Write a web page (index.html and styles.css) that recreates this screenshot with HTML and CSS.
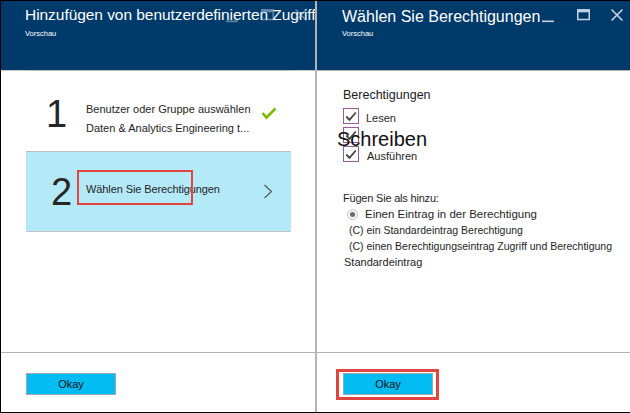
FILE: index.html
```html
<!DOCTYPE html>
<html lang="de">
<head>
<meta charset="utf-8">
<title>Berechtigungen</title>
<link rel="stylesheet" href="styles.css">
</head>
<body>
<div class="frame">
  <section class="blade blade-left">
    <header class="blade-head">
      <h1 class="blade-title">Hinzufügen von benutzerdefinierten Zugriff</h1>
      <div class="blade-sub">Vorschau</div>
      <svg class="win-ctrls faint" width="82" height="24" viewBox="0 0 82 24">
        <rect x="0" y="19.5" width="12" height="1.6" fill="#c5d3e3"/>
        <rect x="35.75" y="9" width="11.5" height="9.5" fill="none" stroke="#c5d3e3" stroke-width="1.5"/>
        <rect x="35" y="8.3" width="13" height="3" fill="#c5d3e3"/>
        <path d="M69.5 8.5 L80.5 19.5 M80.5 8.5 L69.5 19.5" stroke="#c5d3e3" stroke-width="1.6" fill="none"/>
      </svg>
    </header>
    <div class="blade-body">
      <ol class="steps">
        <li class="step step-done">
          <div class="step-num">1</div>
          <div class="step-text">
            <div>Benutzer oder Gruppe auswählen</div>
            <div>Daten &amp; Analytics Engineering t...</div>
          </div>
          <svg class="step-icon step-check" width="16" height="13" viewBox="0 0 16 13">
            <path d="M1.5 6 L5.5 10.5 L14.5 1.5" fill="none" stroke="#7fba00" stroke-width="2.6"/>
          </svg>
        </li>
        <li class="step step-active">
          <div class="step-num step-num-2">2</div>
          <div class="step-text">
            <div>Wählen Sie Berechtigungen</div>
          </div>
          <svg class="step-icon step-chevron" width="16" height="16" viewBox="0 0 16 16">
            <path d="M3.5 1 L10.5 7.5 L3.5 14" fill="none" stroke="#555" stroke-width="1.2"/>
          </svg>
          <div class="hl-box hl-step"></div>
        </li>
      </ol>
    </div>
    <footer class="blade-foot">
      <button class="btn-ok" type="button">Okay</button>
    </footer>
  </section>

  <section class="blade blade-right">
    <header class="blade-head">
      <h1 class="blade-title">Wählen Sie Berechtigungen</h1>
      <div class="blade-sub">Vorschau</div>
      <svg class="win-ctrls" width="82" height="24" viewBox="0 0 82 24">
        <rect x="0" y="19.5" width="12" height="1.6" fill="#c5d3e3"/>
        <rect x="35.75" y="9" width="11.5" height="9.5" fill="none" stroke="#c5d3e3" stroke-width="1.5"/>
        <rect x="35" y="8.3" width="13" height="3" fill="#c5d3e3"/>
        <path d="M69.5 8.5 L80.5 19.5 M80.5 8.5 L69.5 19.5" stroke="#c5d3e3" stroke-width="1.6" fill="none"/>
      </svg>
    </header>
    <div class="blade-body perm">
      <h2 class="perm-title">Berechtigungen</h2>
      <div class="checks">
        <div class="check-row">
          <span class="cbox"><svg width="12" height="11" viewBox="0 0 12 11"><path d="M1.3 5.5 L4.5 8.8 L10.8 1.5" fill="none" stroke="#444" stroke-width="1.8"/></svg></span>
          <span class="check-label">Lesen</span>
        </div>
        <div class="check-row">
          <span class="cbox"><svg width="12" height="11" viewBox="0 0 12 11"><path d="M1.3 5.5 L4.5 8.8 L10.8 1.5" fill="none" stroke="#444" stroke-width="1.8"/></svg></span>
          <span class="big-label">Schreiben</span>
        </div>
        <div class="check-row">
          <span class="cbox"><svg width="12" height="11" viewBox="0 0 12 11"><path d="M1.3 5.5 L4.5 8.8 L10.8 1.5" fill="none" stroke="#444" stroke-width="1.8"/></svg></span>
          <span class="check-label check-label-wide">Ausführen</span>
        </div>
      </div>
      <div class="opts">
        <div class="opt-head">Fügen Sie als hinzu:</div>
        <div class="opt-radio"><span class="radio"></span><span>Einen Eintrag in der Berechtigung</span></div>
        <div class="opt-line">(C) ein Standardeintrag Berechtigung</div>
        <div class="opt-line">(C) einen Berechtigungseintrag Zugriff und Berechtigung</div>
        <div class="opt-tail">Standardeintrag</div>
      </div>
    </div>
    <footer class="blade-foot">
      <div class="btn-wrap">
        <button class="btn-ok" type="button">Okay</button>
        <div class="hl-box hl-btn"></div>
      </div>
    </footer>
  </section>
</div>
</body>
</html>
```
FILE: styles.css
```css
* { box-sizing: border-box; }

body {
  margin: 0;
  font-family: "Liberation Sans", Arial, sans-serif;
  color: #1e1e1e;
  background: #fff;
}

.frame {
  width: 630px;
  height: 413px;
  border-top: 1px solid #000;
  border-left: 1px solid #000;
  border-bottom: 1px solid #000;
  display: flex;
  overflow: hidden;
  background: #fff;
}

.blade {
  display: flex;
  flex-direction: column;
  height: 100%;
  position: relative;
}

.blade-left {
  width: 316px;
  flex: none;
  border-right: 2px solid #b4b4b4;
}

.blade-right {
  flex: 1;
  min-width: 0;
}

.blade-head {
  flex: none;
  height: 70px;
  background: #003a6b;
  border-bottom: 1px solid #c8c8c8;
  padding: 4px 0 0 24px;
  position: relative;
  overflow: hidden;
  color: #fff;
}

.blade-right .blade-head {
  padding: 6px 0 0 25px;
  border-bottom-color: #b4b4b4;
}

.blade-title {
  margin: 0;
  font-size: 16px;
  font-weight: normal;
  line-height: 20px;
  white-space: nowrap;
}

.blade-left .blade-title {
  font-size: 15.5px;
  letter-spacing: -0.05px;
}

.blade-sub {
  font-size: 7.5px;
  line-height: 10px;
  margin-top: 4px;
}

.blade-right .blade-sub {
  margin-top: 2px;
}

.win-ctrls {
  position: absolute;
  left: 225px;
  top: 0;
}

.win-ctrls.faint {
  opacity: 0.5;
}

.blade-body {
  flex: 1;
  position: relative;
}

/* Steps */
.steps {
  list-style: none;
  margin: -1px 24px 0 25px;
  padding: 0;
  position: relative;
}

.step {
  position: relative;
  display: grid;
  grid-template-columns: 40px 1fr 16px;
  align-items: start;
  height: 81px;
  padding: 0 14px 0 20px;
  border-top: 1px solid #bdbdbd;
}

.step-active {
  background: #b4e9f8;
  border-bottom: 1px solid #c6c6c6;
}

.step-num {
  font-size: 38px;
  line-height: 40px;
  color: #262626;
  padding-top: 23px;
}

.step-active .step-num {
  padding-top: 20px;
}

.step-num-2 {
  padding-left: 5px;
}

.step-text {
  font-size: 11px;
  line-height: 19px;
  color: #1e1e1e;
  margin-top: 29px;
  white-space: nowrap;
}

.step-active .step-text {
  margin-top: 28px;
  letter-spacing: -0.1px;
}

.step-check {
  margin-top: 36px;
}

.step-chevron {
  margin-top: 32px;
}

.hl-box {
  position: absolute;
  border: 2px solid #e2443f;
  pointer-events: none;
}

.hl-step {
  left: 51px;
  top: 18px;
  width: 116px;
  height: 35px;
}

/* Footer */
.blade-foot {
  flex: none;
  height: 60px;
  border-top: 1px solid #b4b4b4;
  padding: 20px 0 0 25px;
}

.blade-right .blade-foot {
  padding-left: 26px;
}

.btn-ok {
  display: block;
  width: 90px;
  height: 22px;
  padding: 0;
  background: #00bcf2;
  border: 1px solid #a6a6a6;
  font-family: "Liberation Sans", Arial, sans-serif;
  font-size: 11px;
  color: #111;
}

.btn-wrap {
  position: relative;
  display: inline-block;
}

.hl-btn {
  left: -7px;
  top: -4px;
  width: 103px;
  height: 31px;
  border-width: 3px;
}

/* Permissions */
.perm {
  padding: 17px 0 0 26px;
}

.perm-title {
  margin: 0;
  font-size: 12.5px;
  font-weight: normal;
  line-height: 15px;
  color: #1a1a1a;
}

.checks {
  margin-top: 5px;
  display: flex;
  flex-direction: column;
  gap: 3px;
}

.check-row {
  position: relative;
  display: flex;
  align-items: center;
  height: 16px;
  gap: 7px;
  font-size: 11px;
}

.cbox {
  width: 16px;
  height: 16px;
  flex: none;
  border: 1px solid #9a5a9a;
  background: #fff;
  display: grid;
  place-items: center;
}

.cbox svg {
  display: block;
  margin-top: 1px;
}

.check-label {
  margin-top: 4px;
}

.check-label-wide {
  margin-left: 1px;
}

.big-label {
  position: absolute;
  left: -6px;
  top: 2px;
  font-size: 20px;
  line-height: 20px;
  color: #111;
  white-space: nowrap;
}

.opts {
  margin-top: 28px;
  line-height: 16px;
}

.opt-head {
  font-size: 11px;
  letter-spacing: -0.2px;
}

.opt-radio {
  display: flex;
  align-items: center;
  gap: 7px;
  height: 16px;
  padding-left: 4px;
  font-size: 11.5px;
}

.radio {
  width: 11px;
  height: 11px;
  flex: none;
  border-radius: 50%;
  border: 1px solid #c4c4c4;
  background: #f4f4f4;
  display: grid;
  place-items: center;
}

.radio::after {
  content: "";
  width: 5px;
  height: 5px;
  border-radius: 50%;
  background: #6a6a6a;
}

.opt-line {
  font-size: 10.5px;
  padding-left: 6px;
  white-space: nowrap;
}

.opt-tail {
  font-size: 11px;
  padding-left: 1px;
}
```
